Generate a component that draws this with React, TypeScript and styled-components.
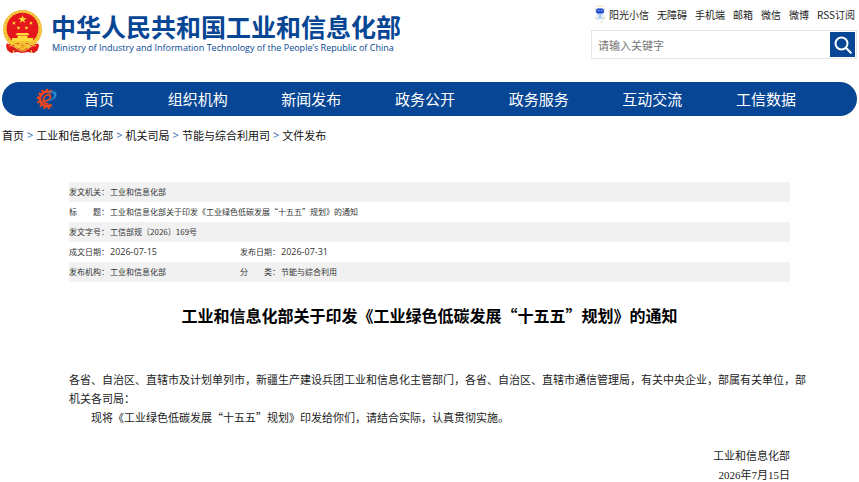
import React from "react";
import styled, { createGlobalStyle } from "styled-components";

const BLUE = "#074694";
const CJK = '"Noto Sans CJK SC", sans-serif';
const MIXED = '"Open Sans", "Noto Sans CJK SC", sans-serif';

const GlobalStyle = createGlobalStyle`
  * { box-sizing: border-box; }
  body {
    margin: 0;
    background: #fff;
    color: #222;
    font-family: ${CJK};
  }
  a { color: inherit; text-decoration: none; }
`;

const Page = styled.div`
  padding: 0 2px;
`;

const Header = styled.header`
  display: flex;
  justify-content: space-between;
  align-items: flex-start;
  height: 82px;
`;

const Brand = styled.a`
  display: flex;
  align-items: center;
  gap: 8px;
  padding-top: 10px;
  color: ${BLUE};
`;

const BrandText = styled.div`
  display: flex;
  flex-direction: column;
  white-space: nowrap;
`;

const BrandName = styled.span`
  font-size: 25px;
  font-weight: 700;
  line-height: 32px;
`;

const BrandLatin = styled.span`
  padding-left: 1px;
  font-family: "Open Sans", sans-serif;
  font-size: 9px;
  font-weight: 500;
  line-height: 12px;
`;

const Tools = styled.div`
  display: flex;
  flex-direction: column;
  width: 266px;
`;

const QuickLinks = styled.nav`
  display: flex;
  justify-content: flex-end;
  align-items: center;
  gap: 8px;
  height: 30px;
  padding: 0 2px 2px 0;
  font-size: 10px;
  white-space: nowrap;
`;

const QuickLink = styled.a`
  display: flex;
  align-items: center;
  gap: 3px;
`;

const SearchForm = styled.form`
  display: flex;
  height: 29px;
  padding: 1px;
  border: 1px solid #e6e6e6;
`;

const SearchInput = styled.input`
  flex: 1;
  min-width: 0;
  padding: 0 5px;
  border: 0;
  outline: 0;
  background: transparent;
  font-family: ${CJK};
  font-size: 11px;
  &::placeholder { color: #757575; }
`;

const SearchButton = styled.button`
  display: flex;
  align-items: center;
  justify-content: center;
  width: 25px;
  padding: 0;
  border: 0;
  background: ${BLUE};
`;

const MainNav = styled.nav`
  display: flex;
  align-items: center;
  height: 34px;
  padding: 0 61px 0 33px;
  border-radius: 17px;
  background: ${BLUE};
`;

const NavList = styled.ul`
  flex: 1;
  display: flex;
  justify-content: space-between;
  margin: 0 0 0 26px;
  padding: 0;
  list-style: none;
  color: #fff;
  font-size: 15px;
  line-height: 32px;
  white-space: nowrap;
`;

const Breadcrumb = styled.nav`
  display: flex;
  gap: 3px;
  padding-top: 11px;
  font-size: 11px;
  line-height: 16px;
  color: #111;
`;

const Separator = styled.span`
  color: #2a66b0;
  font-family: "Open Sans", sans-serif;
`;

const Article = styled.main`
  margin: 39px 67px 0;
`;

const MetaTable = styled.table`
  width: 100%;
  border-collapse: collapse;
  table-layout: fixed;
  font-family: ${CJK};
  font-size: 8px;
  line-height: 20px;
  color: #333;
`;

const MetaRow = styled.tr<{ $shaded?: boolean }>`
  height: 20px;
  background: ${(p) => (p.$shaded ? "#f1f1f1" : "#fff")};
`;

const LabelCell = styled.th`
  padding: 0;
  font-weight: 400;
  text-align: left;
  white-space: nowrap;
`;

const ValueCell = styled.td`
  padding: 0;
  white-space: nowrap;
`;

const DateText = styled.time`
  display: block;
  font-family: ${MIXED};
  font-size: 9px;
`;

const Title = styled.h1`
  margin: 21px 0 43px;
  font-size: 16px;
  font-weight: 700;
  line-height: 24px;
  text-align: center;
  color: #000;
  white-space: nowrap;
`;

const Paragraph = styled.p<{ $indent?: boolean }>`
  margin: 0 -20px 0 0;
  font-size: 11px;
  line-height: 19px;
  text-indent: ${(p) => (p.$indent ? "2em" : "0")};
`;

const Signature = styled.footer`
  margin-top: 20px;
  font-family: "Liberation Serif", ${CJK};
  font-size: 11px;
  line-height: 19px;
  text-align: right;
`;

const SignatureLine = styled.div``;

const Emblem = () => (
  <svg width="41" height="44" viewBox="0 0 41 44" aria-hidden="true">
    <path d="M7 34 5 40l4 3 6-1 5 1 6-1 6 1 4-3-2-6z" fill="#d81e1c" />
    <circle cx="20.500" cy="19.500" r="19.500" fill="#f0b92d" />
    <circle cx="20.500" cy="19.500" r="17.800" fill="none" stroke="#fbd75a" strokeWidth="1.500" strokeDasharray="2 1.500" />
    <circle cx="20.500" cy="18.500" r="15.800" fill="#e5161c" />
    <path d="m20.500 5 1.100 3h3.200l-2.600 1.900 1 3.100-2.700-1.900-2.700 1.900 1-3.100L16.200 8h3.200z" fill="#ffdf3e" />
    <g fill="#ffdc3b">
      <path d="m12 11 .6 1.400h1.500l-1.200.9.500 1.500-1.400-.9-1.400.9.500-1.500-1.200-.9h1.500zM29 11l.6 1.400h1.500l-1.200.9.500 1.500-1.400-.9-1.400.9.500-1.500-1.200-.9h1.500zM16.500 16l.6 1.300h1.400l-1.100.9.400 1.400-1.300-.8-1.300.8.400-1.400-1.100-.9h1.400zM24.500 16l.6 1.300h1.400l-1.100.9.400 1.400-1.300-.8-1.300.8.400-1.400-1.100-.9h1.400z" />
      <path d="M15 23h11l1.500 2h-14zM15.500 25.500h10V28h-10zM10 28h21v3H10z" />
      <path d="M6 31h29l-2 2H8z" fill="#f7c633" />
    </g>
    <path d="M5 33c3 3 6 1 8 3l-3 4-5-1-1-3zM36 33c-3 3-6 1-8 3l3 4 5-1 1-3z" fill="#e5161c" />
    <circle cx="20.500" cy="36" r="4" fill="#f5c431" />
    <circle cx="20.500" cy="36" r="2" fill="#e9a226" />
    <path d="M7 36c5-2 8 5 13.500 5S29 34 34 36M12 40l-1 3m18-3 1 3" fill="none" stroke="#fbd04a" strokeWidth="1" />
  </svg>
);

const Mascot = () => (
  <svg width="12" height="18" viewBox="0 0 12 18" aria-hidden="true">
    <g fill="#f3ca4a">
      <circle cx="3" cy="1.500" r=".7" /><circle cx="6" cy=".8" r=".7" /><circle cx="9" cy="1.500" r=".7" />
      <circle cx="1" cy="4" r=".6" /><circle cx="11" cy="4" r=".6" /><circle cx="1.500" cy="13" r=".7" />
      <circle cx="10.500" cy="13" r=".7" /><circle cx="7.500" cy="17" r=".7" />
    </g>
    <path d="M3 9h6l1 5-2 2-1-2H5l-1 2-2-2z" fill="#d7e7f7" />
    <path d="M5 9.500h2V14H5z" fill="#a9c9ec" />
    <rect x="1.500" y="3" width="9" height="6.500" rx="3" fill="#b8d0f3" />
    <rect x="2" y="3.500" width="8" height="5" rx="2.300" fill="#2d50cb" />
    <path d="M4 5.500h1.500M7 5.500h1.500" stroke="#7da4ff" strokeWidth="1" />
  </svg>
);

const GearLogo = () => (
  <svg width="23" height="22" viewBox="0 0 23 22" aria-hidden="true">
    <path d="M17 3.500A9 9 0 1 0 17 18.500" fill="none" stroke="#f2481d" strokeWidth="2.400" strokeDasharray="2.200 2" />
    <path d="M16 4.800A7.200 7.200 0 1 0 16.500 16.600" fill="none" stroke="#f2481d" strokeWidth="2.600" />
    <path d="M7.500 13c4 .5 8.500-1.500 8-4.500-.4-2.800-5.500-2.200-6.800 1.500C7.300 14 10 16.500 13.500 15.500" fill="none" stroke="#f2481d" strokeWidth="1.800" />
    <path d="M21.500 5.500c1 3.500-4 8.500-11.500 8 5.500-.8 9.500-4 9-6.800-.4-2.500-5-3-7.500-.7C14 2.500 20.500 2.500 21.500 5.500z" fill="#258bd2" />
  </svg>
);

const SearchIcon = () => (
  <svg width="18" height="18" viewBox="0 0 18 18" fill="none" stroke="#fff" strokeWidth="2" aria-hidden="true">
    <circle cx="7.500" cy="7.500" r="6" />
    <path d="m11.800 11.800 5 5" strokeLinecap="round" />
  </svg>
);

const quickLinks = ["无障碍", "手机端", "邮箱", "微信", "微博", "RSS订阅"];
const navItems = ["首页", "组织机构", "新闻发布", "政务公开", "政务服务", "互动交流", "工信数据"];
const crumbs = ["首页", "工业和信息化部", "机关司局", "节能与综合利用司", "文件发布"];

export default function App() {
  return (
    <Page lang="zh-CN">
      <GlobalStyle />
      <Header>
        <Brand href="#">
          <Emblem />
          <BrandText>
            <BrandName>中华人民共和国工业和信息化部</BrandName>
            <BrandLatin>Ministry of Industry and Information Technology of the People’s Republic of China</BrandLatin>
          </BrandText>
        </Brand>
        <Tools>
          <QuickLinks aria-label="快捷链接">
            <QuickLink href="#"><Mascot />阳光小信</QuickLink>
            {quickLinks.map((item) => <QuickLink href="#" key={item}>{item}</QuickLink>)}
          </QuickLinks>
          <SearchForm role="search" onSubmit={(e) => e.preventDefault()}>
            <SearchInput type="text" placeholder="请输入关键字" aria-label="请输入关键字" />
            <SearchButton type="submit" aria-label="搜索"><SearchIcon /></SearchButton>
          </SearchForm>
        </Tools>
      </Header>

      <MainNav aria-label="主导航">
        <GearLogo />
        <NavList>
          {navItems.map((item) => <li key={item}><a href="#">{item}</a></li>)}
        </NavList>
      </MainNav>

      <Breadcrumb aria-label="当前位置">
        {crumbs.map((item, i) => (
          <React.Fragment key={item}>
            {i > 0 && <Separator>&gt;</Separator>}
            <a href="#">{item}</a>
          </React.Fragment>
        ))}
      </Breadcrumb>

      <Article>
        <MetaTable>
          <colgroup>
            <col width="41" />
            <col width="130" />
            <col width="41" />
            <col />
          </colgroup>
          <tbody>
            <MetaRow $shaded>
              <LabelCell scope="row">发文机关：</LabelCell>
              <ValueCell colSpan={3}>工业和信息化部</ValueCell>
            </MetaRow>
            <MetaRow>
              <LabelCell scope="row">标　　题：</LabelCell>
              <ValueCell colSpan={3}>工业和信息化部关于印发《工业绿色低碳发展“十五五”规划》的通知</ValueCell>
            </MetaRow>
            <MetaRow $shaded>
              <LabelCell scope="row">发文字号：</LabelCell>
              <ValueCell colSpan={3}>工信部规〔2026〕169号</ValueCell>
            </MetaRow>
            <MetaRow>
              <LabelCell scope="row">成文日期：</LabelCell>
              <ValueCell><DateText>2026-07-15</DateText></ValueCell>
              <LabelCell scope="row">发布日期：</LabelCell>
              <ValueCell><DateText>2026-07-31</DateText></ValueCell>
            </MetaRow>
            <MetaRow $shaded>
              <LabelCell scope="row">发布机构：</LabelCell>
              <ValueCell>工业和信息化部</ValueCell>
              <LabelCell scope="row">分　　类：</LabelCell>
              <ValueCell>节能与综合利用</ValueCell>
            </MetaRow>
          </tbody>
        </MetaTable>

        <Title>工业和信息化部关于印发《工业绿色低碳发展“十五五”规划》的通知</Title>

        <Paragraph>
          各省、自治区、直辖市及计划单列市，新疆生产建设兵团工业和信息化主管部门，各省、自治区、直辖市通信管理局，有关中央企业，部属有关单位，部机关各司局：
        </Paragraph>
        <Paragraph $indent>现将《工业绿色低碳发展“十五五”规划》印发给你们，请结合实际，认真贯彻实施。</Paragraph>

        <Signature>
          <SignatureLine>工业和信息化部</SignatureLine>
          <SignatureLine>2026年7月15日</SignatureLine>
        </Signature>
      </Article>
    </Page>
  );
}
